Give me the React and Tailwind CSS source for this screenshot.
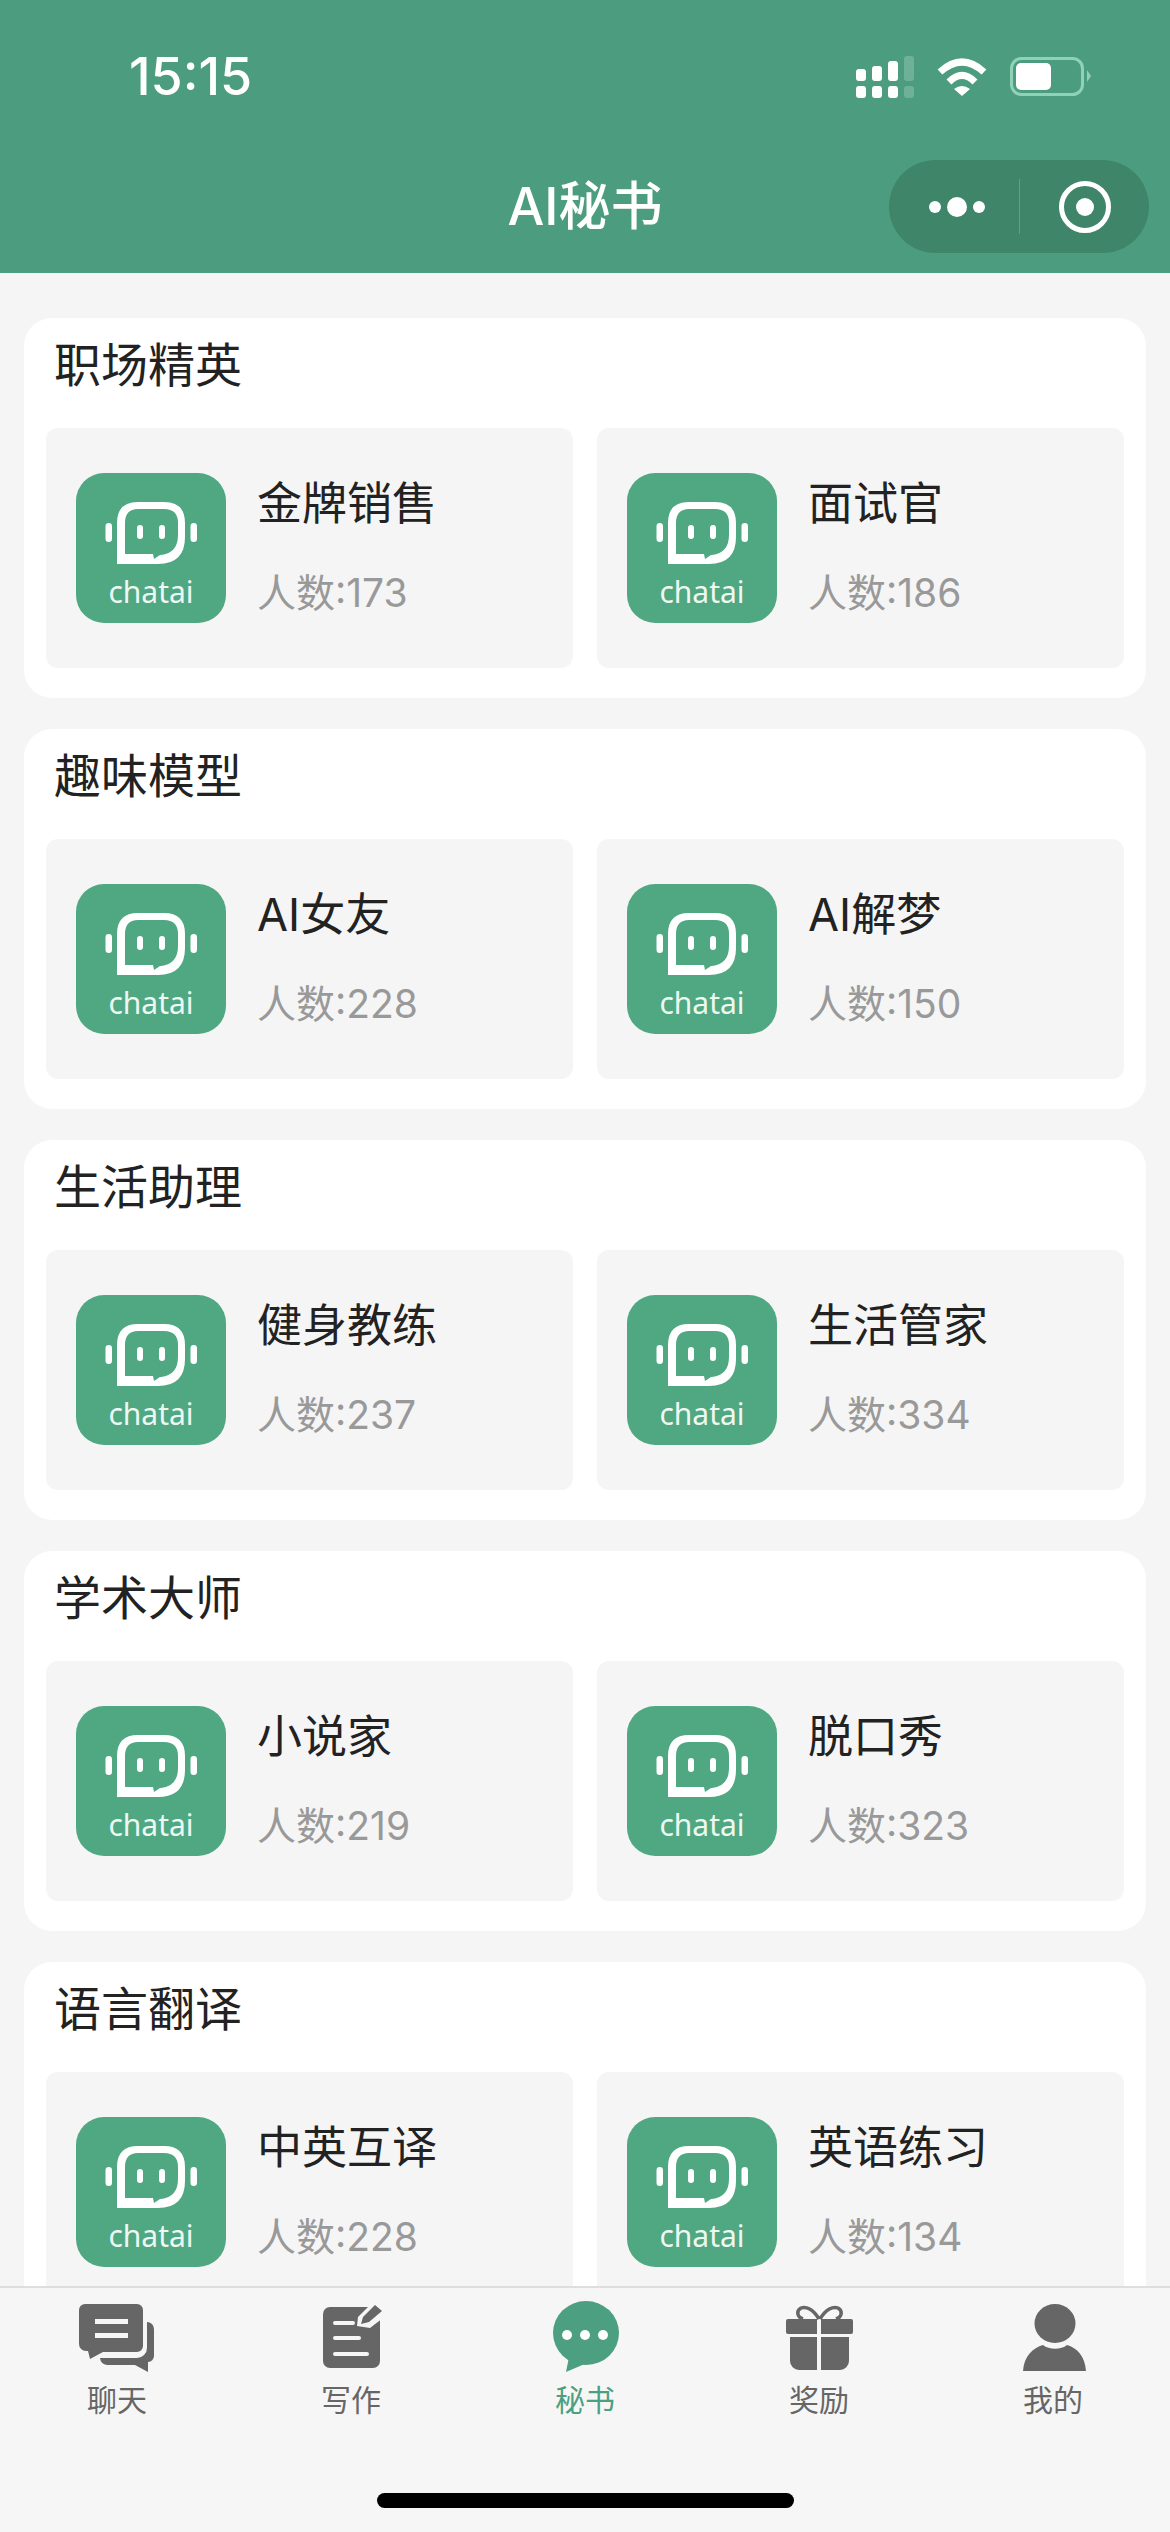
import React from 'react';

const sections = [
  { title: '职场精英', items: [{ name: '金牌销售', count: 173 }, { name: '面试官', count: 186 }] },
  { title: '趣味模型', items: [{ name: 'AI女友', count: 228 }, { name: 'AI解梦', count: 150 }] },
  { title: '生活助理', items: [{ name: '健身教练', count: 237 }, { name: '生活管家', count: 334 }] },
  { title: '学术大师', items: [{ name: '小说家', count: 219 }, { name: '脱口秀', count: 323 }] },
  { title: '语言翻译', items: [{ name: '中英互译', count: 228 }, { name: '英语练习', count: 134 }] },
];

const SignalIcon = () => (
  <svg width="58" height="42" viewBox="0 0 58 42" fill="#fff">
    <rect x="0" y="13" width="10" height="12" rx="3" />
    <rect x="16" y="10" width="10" height="15" rx="3" />
    <rect x="32" y="5" width="10" height="20" rx="3" />
    <rect x="48" y="0" width="10" height="25" rx="3" opacity="0.2" />
    <rect x="0" y="30" width="10" height="12" rx="3" />
    <rect x="16" y="30" width="10" height="12" rx="3" />
    <rect x="32" y="30" width="10" height="12" rx="3" />
    <rect x="48" y="30" width="10" height="12" rx="3" opacity="0.2" />
  </svg>
);

const WifiIcon = () => (
  <svg width="50" height="38" viewBox="0 0 50 38" fill="none" stroke="#fff" strokeWidth="7">
    <path d="M3 14Q25 -6 47 14" />
    <path d="M12 24Q25 11 38 24" />
    <path d="M17 31Q25 25 33 31L25 38Z" fill="#fff" stroke="none" />
  </svg>
);

const BatteryIcon = () => (
  <svg width="82" height="40" viewBox="0 0 82 40" fill="none">
    <rect x="1.5" y="1.5" width="71" height="36" rx="10" stroke="#8fd2b9" strokeWidth="3" />
    <rect x="6" y="6" width="35" height="27" rx="5" fill="#fff" />
    <path d="M77 13L81 19L77 25Z" fill="#8fd2b9" />
  </svg>
);

const BotLogo = () => (
  <div className="w-[150px] h-[150px] shrink-0 rounded-[28px] bg-[#4fa882] flex flex-col items-center pt-[25px]">
    <svg width="96" height="70" viewBox="27 25 96 70" fill="#fff">
      <path
        fillRule="evenodd"
        d="M41 91V50Q41 29 62 29H88Q109 29 109 50V64Q109 91 82 91ZM49 81L77 81L78 86L84 82H85Q102 80 102 62V50Q102 36 88 36H62Q49 36 49 50Z"
      />
      <rect x="61" y="52" width="6" height="14" rx="3" />
      <rect x="83" y="52" width="6" height="14" rx="3" />
      <rect x="29.5" y="50" width="6.5" height="19" rx="3.25" />
      <rect x="114.5" y="50" width="6.5" height="19" rx="3.25" />
    </svg>
    <span className="mt-[4px] text-[30px] leading-[40px] text-[#eef8f3] font-['Noto_Sans',sans-serif]">chatai</span>
  </div>
);

const ChatTab = () => (
  <svg className="w-20 h-[72px]" viewBox="-2 -3 80 72" fill="#666">
    <path
      fillRule="evenodd"
      d="M6 0H58a6 6 0 0 1 6 6V42a6 6 0 0 1-6 6H24L11 55L9 47H7a7 7 0 0 1-7-7V6a6 6 0 0 1 6-6ZM16 15V20H49V15ZM16 29V34H49V29Z"
    />
    <path d="M68 18a7 7 0 0 1 7 7V52a6 6 0 0 1-6 6L69 68L56 61H28a8 8 0 0 1-7-7H58a10 10 0 0 0 10-10Z" />
  </svg>
);

const WriteTab = () => (
  <svg className="w-20 h-[72px]" viewBox="-12 -3 80 72">
    <rect x="0" y="3" width="57" height="61" rx="7" fill="#666" />
    <path d="M12 19H30M12 34H36M12 50H44" stroke="#f6f6f6" strokeWidth="4" strokeLinecap="round" />
    <path d="M34 22L35 13L46 2H60V14L47 24Z" fill="#f6f6f6" />
    <path d="M38 20L40 13L52 1L59 7L46 18Z" fill="#666" />
  </svg>
);

const BubbleTab = () => (
  <svg className="w-20 h-[72px]" viewBox="-8 0 80 72" fill="#4c9f80">
    <ellipse cx="33" cy="32" rx="33" ry="32" />
    <path d="M16 56L13 71L34 62Z" />
    <circle cx="14" cy="34" r="5" fill="#fff" />
    <circle cx="32" cy="34" r="5" fill="#fff" />
    <circle cx="50" cy="34" r="5" fill="#fff" />
  </svg>
);

const GiftTab = () => (
  <svg className="w-20 h-[72px]" viewBox="-7 -5 80 72" fill="#666">
    <path
      d="M33 13C27 3 20 0 15 2C10 5 11 11 17 13M34 13C40 3 47 0 52 2C57 5 56 11 50 13"
      fill="none"
      stroke="#666"
      strokeWidth="3.5"
    />
    <path d="M2 13H31V28H2a2 2 0 0 1-2-2V15a2 2 0 0 1 2-2ZM35 13H65a2 2 0 0 1 2 2V26a2 2 0 0 1-2 2H35Z" />
    <path d="M4 31H31V64H13a9 9 0 0 1-9-9ZM35 31H63V55a9 9 0 0 1-9 9H35Z" />
  </svg>
);

const PersonTab = () => (
  <svg className="w-20 h-[72px]" viewBox="-10 -3 80 72" fill="#666">
    <ellipse cx="32" cy="19.5" rx="20.5" ry="19.5" />
    <path d="M0 67C1 52 10 44 20 41C26 46 38 46 44 41C54 44 62 52 63 67Z" />
  </svg>
);

const tabs = [
  { label: '聊天', Icon: ChatTab },
  { label: '写作', Icon: WriteTab },
  { label: '秘书', Icon: BubbleTab, active: true },
  { label: '奖励', Icon: GiftTab },
  { label: '我的', Icon: PersonTab },
];

const AssistantTile = ({ name, count }) => (
  <div className="h-[240px] rounded-[12px] bg-[#f5f5f5] flex items-center pl-[30px] gap-[31px]">
    <BotLogo />
    <div className="h-[150px] flex flex-col justify-between">
      <div className="text-[45px] leading-[62px] text-[#222]">{name}</div>
      <div className="text-[39px] leading-[60px] text-[#999]">人数:{count}</div>
    </div>
  </div>
);

const App = () => {
  return (
    <div className="h-[2532px] flex flex-col overflow-hidden bg-[#f5f5f5] font-['Inter','Noto_Sans_CJK_SC',sans-serif]">
      {/* Status bar and navigation title */}
      <header className="h-[273px] shrink-0 bg-[#4c9d7f] pt-[52px] text-white">
        <div className="h-[50px] flex items-center justify-between pl-[129px] pr-[78px]">
          <span className="text-[52px] leading-[50px] font-medium">15:15</span>
          <div className="flex items-center gap-[23px]">
            <SignalIcon />
            <WifiIcon />
            <BatteryIcon />
          </div>
        </div>
        <div className="mt-[58px] grid grid-cols-[1fr_auto_1fr] items-center">
          <div />
          <h1 className="text-[52px] leading-[60px] font-medium">AI秘书</h1>
          <div className="justify-self-end mr-[21px] w-[260px] h-[93px] rounded-full bg-[#3f8569] flex items-center">
            <div className="w-[130px] flex items-center justify-center gap-[6px] pl-[6px]">
              <span className="w-3 h-3 rounded-full bg-white" />
              <span className="w-5 h-5 rounded-full bg-white" />
              <span className="w-3 h-3 rounded-full bg-white" />
            </div>
            <div className="w-px h-[55px] bg-white/20" />
            <div className="flex-1 flex items-center justify-center">
              <div className="w-[52px] h-[52px] rounded-full border-[5px] border-white flex items-center justify-center">
                <span className="w-[18px] h-[18px] rounded-full bg-white" />
              </div>
            </div>
          </div>
        </div>
      </header>

      <main className="flex-1 min-h-0 overflow-hidden px-6 pt-[45px] flex flex-col gap-[31px]">
        {sections.map((section) => (
          <section key={section.title} className="shrink-0 h-[380px] rounded-[28px] bg-white px-[22px]">
            <h2 className="h-[110px] pl-[8px] text-[47px] leading-[94px] font-normal text-[#222]">{section.title}</h2>
            <div className="grid grid-cols-2 gap-6">
              {section.items.map((item) => (
                <AssistantTile key={item.name} name={item.name} count={item.count} />
              ))}
            </div>
          </section>
        ))}
      </main>

      {/* Bottom tab bar */}
      <nav className="h-[246px] shrink-0 bg-[#f6f6f6] border-t-2 border-[#dedede] flex flex-col items-center pt-[13px]">
        <div className="w-full grid grid-cols-5">
          {tabs.map(({ label, Icon, active }) => (
            <div key={label} className="flex flex-col items-center">
              <Icon />
              <span className={`mt-[7px] text-[30px] leading-[40px] ${active ? 'text-[#4c9f80]' : 'text-[#666]'}`}>
                {label}
              </span>
            </div>
          ))}
        </div>
        <div className="mt-[73px] w-[417px] h-[15px] rounded-full bg-black" />
      </nav>
    </div>
  );
};

export default App;
